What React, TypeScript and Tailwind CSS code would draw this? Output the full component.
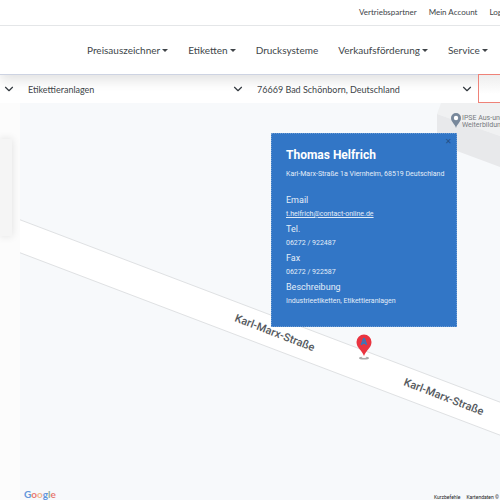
import { ChevronDown } from "lucide-react";

const topLinks = ["Vertriebspartner", "Mein Account", "Login"];

const navItems = [
  { label: "Preisauszeichner", menu: true },
  { label: "Etiketten", menu: true },
  { label: "Drucksysteme", menu: false },
  { label: "Verkaufsförderung", menu: true },
  { label: "Service", menu: true },
];

const details = [
  { label: "Tel.", value: "06272 / 922487" },
  { label: "Fax", value: "06272 / 922587" },
  { label: "Beschreibung", value: "Industrieetiketten, Etikettieranlagen" },
];

function Filter({ label, value, className }: { label: string; value: string; className: string }) {
  return (
    <div className={`relative h-7 ${className}`}>
      <select
        aria-label={label}
        defaultValue={value}
        className="h-full w-full appearance-none bg-transparent pr-7 pl-2 text-[9px] text-[#404549] outline-none"
      >
        <option>{value}</option>
      </select>
      <ChevronDown className="pointer-events-none absolute top-[7px] right-1 size-3.5 text-[#343a40]" strokeWidth={2} />
    </div>
  );
}

function Header() {
  return (
    <header className="relative z-10 shrink-0 border-b border-[#cdd3e2] bg-white whitespace-nowrap text-[#404549] shadow-[0_5px_12px_rgba(0,0,0,0.12)]">
      <div className="flex h-[26px] gap-3 overflow-hidden border-b border-[#e4e6e8] pl-[359px] text-[8px] leading-[25px]">
        {topLinks.map((item) => (
          <a key={item} href="#">
            {item}
          </a>
        ))}
      </div>
      <nav className="flex h-12 items-center gap-5 overflow-hidden pl-[87px] text-[10px]">
        {navItems.map((item) => (
          <a key={item.label} href="#" className="flex items-center gap-[2px]">
            {item.label}
            {item.menu && (
              <span className="border-x-[3px] border-t-[3px] border-x-transparent border-t-[#404549]" />
            )}
          </a>
        ))}
      </nav>
    </header>
  );
}

function MapCanvas() {
  return (
    <svg className="absolute top-0 left-0 h-full w-full" aria-label="Karte">
      <path d="M421 0 L417 11 L480 33 L2000 560 V0Z" fill="#f0f1f2" />
      <path d="M417 11 L480 33 L2000 560 V900 L480 64 L437 48 L417 40Z" fill="#e8e9eb" />
      <path d="M-2 116 L1998 876 V909 L-2 149Z" fill="#ffffff" stroke="#dfe1e3" strokeWidth="1" />
      <g fill="#55595e" fontFamily="Roboto, sans-serif" fontSize="11" fontWeight="500">
        <text transform="translate(214 218) rotate(21)">Karl-Marx-Straße</text>
        <text transform="translate(383 282) rotate(21)">Karl-Marx-Straße</text>
      </g>
      <g fill="#777b80" fontFamily="Roboto, sans-serif" fontSize="7">
        <text x="442" y="17">IPSE Aus-und</text>
        <text x="442" y="24">Weiterbildung</text>
      </g>
      <path d="M436 25 C435 21 431 19 431 15 A5 5 0 0 1 441 15 C441 19 437 21 436 25Z" fill="#78889b" />
      <circle cx="436" cy="15" r="2.2" fill="#ffffff" />
      <ellipse cx="344" cy="255" rx="5" ry="1.6" fill="#aaaaaa" />
      <ellipse cx="344" cy="254" rx="2.5" ry="1" fill="#ffffff" />
      <path d="M344 253 C342 247 336.500 245 336.500 239 A7.500 7.500 0 0 1 351.500 239 C351.500 245 346 247 344 253Z" fill="#e93440" />
      <path d="M344 235 L341.500 242 M344 235 L346.500 242 M342.500 240 H345.500" fill="none" stroke="#3f74b5" strokeWidth="1.800" />
    </svg>
  );
}

function GoogleLogo() {
  return (
    <a
      href="#"
      aria-label="Google"
      className="absolute bottom-0 left-1 font-['Lato',sans-serif] text-[10px] leading-3 font-bold"
    >
      <span className="text-[#6296dc]">G</span>
      <span className="text-[#e77b74]">o</span>
      <span className="text-[#f0b68a]">o</span>
      <span className="text-[#6296dc]">g</span>
      <span className="text-[#8fae9c]">l</span>
      <span className="text-[#e77b74]">e</span>
    </a>
  );
}

function InfoWindow() {
  return (
    <section className="absolute top-[30px] left-[251px] h-[194px] w-[186px] border border-dotted border-[#6c9bd2] bg-[#3276c6] pt-[13px] pl-3.5 whitespace-nowrap text-[#e3edf8]">
      <button aria-label="Schließen" className="absolute top-1 right-1 text-[8px] leading-2 text-[#234f88]">
        ✕
      </button>
      <h2 className="text-xs leading-4 font-bold text-white">Thomas Helfrich</h2>
      <p className="mt-[3px] text-[7px] leading-4">Karl-Marx-Straße 1a Viernheim, 68519 Deutschland</p>
      <h3 className="mt-[11px] text-[9px] leading-[14px]">Email</h3>
      <a href="#" className="block text-[7px] leading-[15px] underline">
        t.helfrich@contact-online.de
      </a>
      {details.map((item) => (
        <div key={item.label}>
          <h3 className="text-[9px] leading-[14px]">{item.label}</h3>
          <p className="text-[7px] leading-[15px]">{item.value}</p>
        </div>
      ))}
    </section>
  );
}

export default function App() {
  return (
    <div className="flex h-screen flex-col overflow-hidden bg-[#fcfcfc] font-['Lato',sans-serif]">
      <Header />
      <form className="flex shrink-0 bg-white">
        <Filter label="Umkreis" value="" className="w-5" />
        <Filter label="Kategorie" value="Etikettieranlagen" className="flex-1" />
        <Filter label="Standort" value="76669 Bad Schönborn, Deutschland" className="flex-1" />
        <button
          type="button"
          aria-label="Suchen"
          className="relative z-20 -mt-px w-[22px] border border-r-0 border-[#ef8278] bg-linear-to-b from-[#eeeeee] to-white to-70%"
        />
      </form>
      <main className="flex min-h-0 flex-1">
        <aside className="w-5 shrink-0 pt-9">
          <div className="mr-2 h-[97px] bg-[#f5f5f5] shadow-[0_0_8px_rgba(0,0,0,0.12)]" />
        </aside>
        <div className="relative min-w-0 flex-1 overflow-hidden bg-[#f7f9fb] font-['Roboto',sans-serif]">
          <MapCanvas />
          <InfoWindow />
          <GoogleLogo />
          <div className="absolute bottom-0 left-[414px] flex gap-1.5 text-[5px] leading-[5px] whitespace-nowrap text-[#222222]">
            <button className="leading-[5px]">Kurzbefehle</button>
            <span>Kartendaten © 2023</span>
          </div>
        </div>
      </main>
    </div>
  );
}
